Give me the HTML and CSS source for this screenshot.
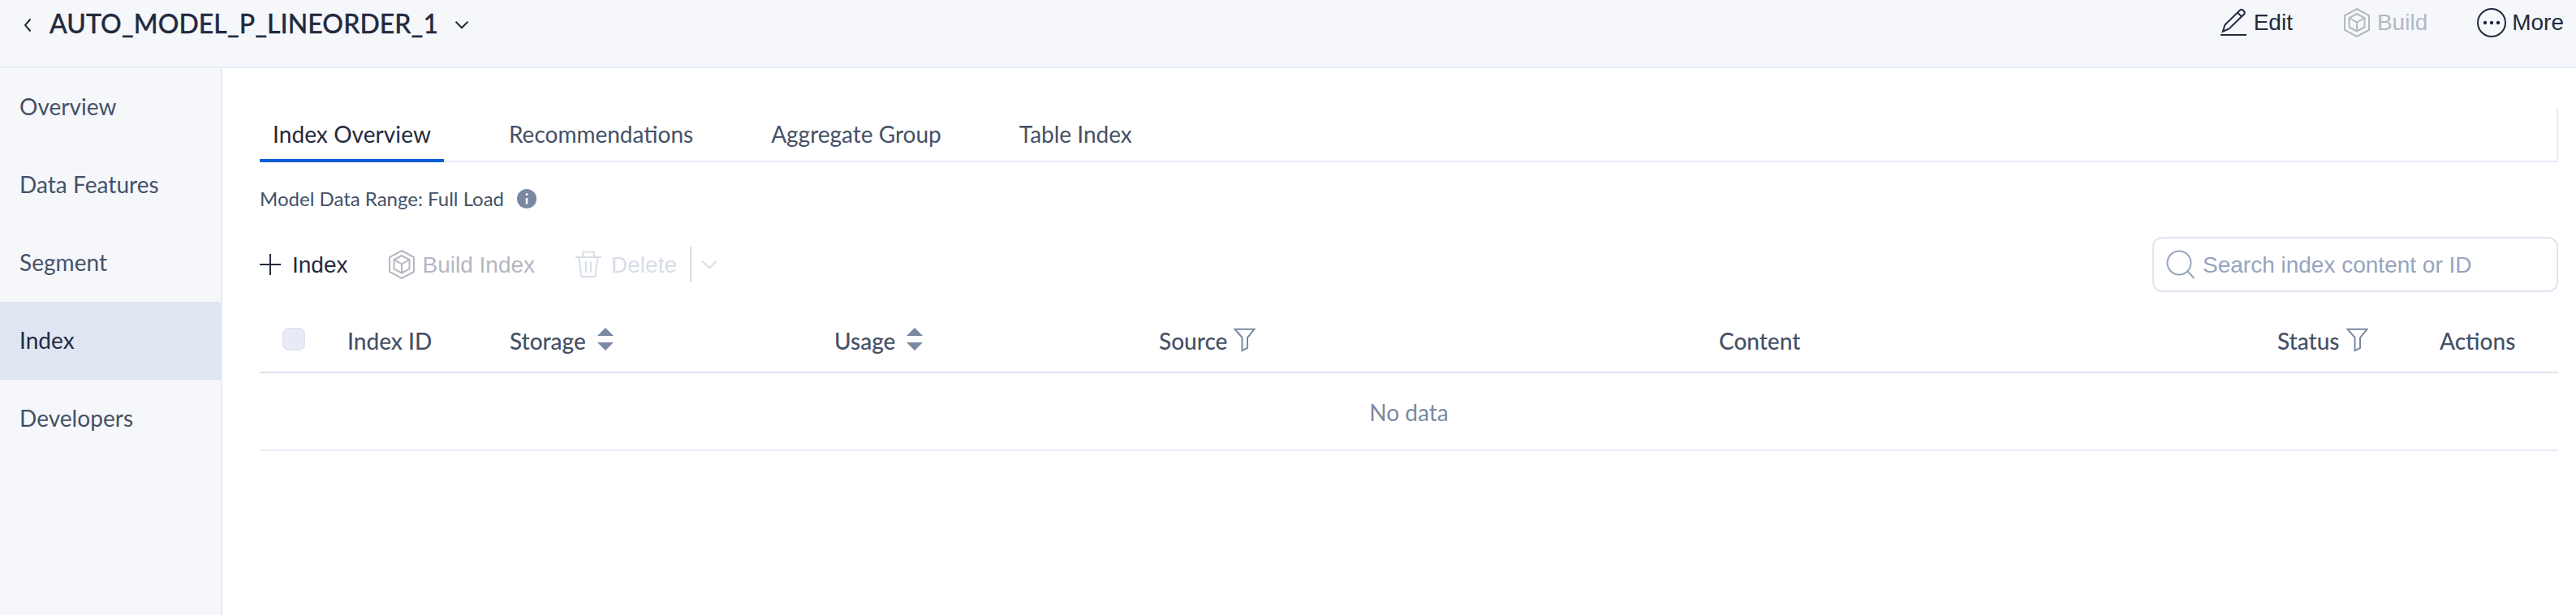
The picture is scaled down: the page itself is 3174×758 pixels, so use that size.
FILE: index.html
```html
<!DOCTYPE html>
<html lang="en">
<head>
<meta charset="utf-8">
<title>AUTO_MODEL_P_LINEORDER_1</title>
<link rel="stylesheet" href="styles.css">
</head>
<body>
<header class="topbar">
  <div class="model">
    <svg class="back" width="12" height="18" viewBox="0 0 12 18"><path d="M9.5 1.5 3 9l6.500 7.500"/></svg>
    <h1 class="title">AUTO_MODEL_P_LINEORDER_1</h1>
    <svg class="caret" width="18" height="12" viewBox="0 0 18 12"><path d="M1.500 1.800 9 9.300l7.500-7.500"/></svg>
  </div>
  <nav class="actions">
    <a class="act act-edit"><svg width="32" height="36" viewBox="0 0 32 36"><path d="M2.800 29 5.500 20.500 24 2.500q1.800-1.500 3.500 0l1.500 1.500q1.500 1.500 0 3.500L10.500 25.500zM21 5.500l5 5M0 33h32"/></svg>Edit</a>
    <a class="act act-build off"><svg width="32" height="36" viewBox="0 0 32 36"><path d="M16 1 31 9v18l-15 8-15-8V9zM16 7 25.500 12v11.500L16 28.500l-9.500-5V12zM6.500 12 16 17.500l9.500-5.500M16 17.500v11"/></svg>Build</a>
    <a class="act act-more"><svg width="36" height="38" viewBox="0 0 36 38"><circle cx="18" cy="19" r="17"/><g class="dots"><circle cx="10" cy="19" r="2.200"/><circle cx="18" cy="19" r="2.200"/><circle cx="26" cy="19" r="2.200"/></g></svg>More</a>
  </nav>
</header>
<div class="body">
  <aside class="side">
    <a class="side-item">Overview</a>
    <a class="side-item">Data Features</a>
    <a class="side-item">Segment</a>
    <a class="side-item current">Index</a>
    <a class="side-item">Developers</a>
  </aside>
  <main class="main">
    <div class="tabs">
      <a class="tab selected">Index Overview</a>
      <a class="tab">Recommendations</a>
      <a class="tab">Aggregate Group</a>
      <a class="tab">Table Index</a>
    </div>
    <div class="range">Model Data Range: Full Load
      <svg class="info" width="24" height="24" viewBox="0 0 24 24"><circle cx="12" cy="12" r="12"/><path d="M12 11v7.500"/><circle class="dot" cx="12" cy="6.500" r="1.500"/></svg>
    </div>
    <div class="toolbar">
      <button class="btn btn-add"><svg width="26" height="28" viewBox="0 0 26 28"><path d="M0 14h26M13 1v26"/></svg><span>Index</span></button>
      <button class="btn btn-build off"><svg width="32" height="36" viewBox="0 0 32 36"><path d="M16 1 31 9v18l-15 8-15-8V9zM16 7 25.500 12v11.500L16 28.500l-9.500-5V12zM6.500 12 16 17.500l9.500-5.500M16 17.500v11"/></svg><span>Build Index</span></button>
      <button class="btn btn-del"><svg width="32" height="34" viewBox="0 0 32 34"><path d="M0 8h32M9 8V3q0-1.500 1.500-1.500h11q1.500 0 1.500 1.500v5M4.500 8l2.500 22.500q.2 1.500 1.500 1.500h14.500q1.300 0 1.500-1.500L27.500 8M13 13v14M19 13v14"/></svg><span>Delete</span></button>
      <button class="btn btn-drop"><svg width="20" height="12" viewBox="0 0 20 12"><path d="M1 1.500l9 9 9-9"/></svg></button>
      <label class="search"><svg width="36" height="36" viewBox="0 0 36 36"><circle cx="16" cy="16" r="14.500"/><path d="m26.500 26.500 8 8.500"/></svg><input type="text" placeholder="Search index content or ID"></label>
    </div>
    <div class="table">
      <div class="row head">
        <div class="cell check"><span class="box"></span></div>
        <div class="cell">Index ID</div>
        <div class="cell">Storage<span class="sort"></span></div>
        <div class="cell">Usage<span class="sort"></span></div>
        <div class="cell">Source<svg class="filter" width="27" height="30" viewBox="0 0 27 30"><path d="M1.500 1.800h24L17 12v12.800l-6.500 3.400V12z"/></svg></div>
        <div class="cell">Content</div>
        <div class="cell">Status<svg class="filter" width="27" height="30" viewBox="0 0 27 30"><path d="M1.500 1.800h24L17 12v12.800l-6.500 3.400V12z"/></svg></div>
        <div class="cell">Actions</div>
      </div>
      <div class="empty">No data</div>
    </div>
  </main>
</div>
</body>
</html>
```
FILE: styles.css
```css
* { box-sizing: border-box; }
body {
  margin: 0;
  height: 758px;
  display: flex;
  flex-direction: column;
  overflow: hidden;
  background: #fff;
  color: #455166;
  font: 28px/36px Lato, sans-serif;
}
svg {
  display: block;
  flex: none;
  fill: none;
  stroke: currentColor;
  stroke-width: 2;
}
.topbar {
  flex: none;
  height: 84px;
  display: flex;
  justify-content: space-between;
  align-items: flex-start;
  background: #f5f7fb;
  border-bottom: 2px solid #e6ebf7;
  color: #232a3e;
}
.model { display: flex; align-items: center; padding-left: 28px; height: 62px; }
.title { margin: 0 20px 0 21px; font-size: 32px; line-height: 40px; font-weight: 500; letter-spacing: .08px; padding-bottom: 5px; -webkit-text-stroke: .3px; }
.actions { display: flex; height: 56px; align-items: center; padding-right: 15px; }
.act, .btn { display: flex; align-items: center; font-family: "Liberation Sans", Arial, sans-serif; }
.act { gap: 9px; }
.act-more { gap: 7px; }
.act-build { margin: 0 61px 0 63px; }
.off { color: #b5b7c1; }
.dots { fill: currentColor; stroke: none; }

.body { flex: 1; display: flex; min-height: 0; }
.side {
  flex: none;
  width: 274px;
  background: #f5f7fb;
  border-right: 2px solid #e6ebf7;
}
.side-item { display: block; height: 96px; padding: 0 24px; line-height: 94px; letter-spacing: .05px; }
.current { background: #dfe5f1; color: #232a3e; }

.main { flex: 1; padding: 48px 22px 0 46px; }
.tabs {
  height: 68px;
  display: flex;
  gap: 64px;
  border: 2px solid #e6ebf7;
  border-width: 0 2px 2px 0;
}
.tab { height: 68px; padding: 0 16px; line-height: 66px; }
.selected { color: #232a3e; border-bottom: 4px solid #0a5ed7; letter-spacing: .08px; }
.range {
  display: flex;
  align-items: center;
  gap: 16px;
  margin-top: 29px;
  height: 32px;
  font-size: 24px;
  line-height: 32px;
}
.info { fill: #7a88a1; stroke: none; }
.info path { stroke: #fff; stroke-width: 2.500; }
.info .dot { fill: #fff; }

.toolbar { display: flex; align-items: center; height: 68px; margin-top: 31px; }
.btn { border: 0; padding: 0; background: none; font-size: 28px; line-height: 36px; color: #232a3e; height: 44px; }
.btn span { padding-top: 2px; }
.btn-add { gap: 14px; }
.btn-build { margin-left: 50px; gap: 10px; }
.btn-del { margin-left: 50px; gap: 12px; padding-right: 16px; }
.btn.off { color: #b5b7c1; }
.btn-del, .btn-drop { color: #d8dde7; }
.btn-drop { border-left: 2px solid #d8dde7; padding-left: 12px; }
.search {
  display: flex;
  align-items: center;
  gap: 9px;
  width: 500px;
  height: 68px;
  margin-left: auto;
  padding: 0 15px;
  border: 2px solid #dfe5f1;
  border-radius: 12px;
  color: #96a5bd;
}
.search input {
  flex: 1;
  min-width: 0;
  border: 0;
  padding: 2px 0 0;
  background: none;
  font: 28px "Liberation Sans", Arial, sans-serif;
}
.search input::placeholder { color: #96a5bd; }

.table { margin-top: 20px; }
.row {
  display: grid;
  grid-template-columns: 88px 200px 400px 400px 690px 688px 200px 166px;
  height: 80px;
  border-bottom: 2px solid #dfe5f1;
}
.head { font-weight: 500; }
.cell { display: flex; align-items: center; padding: 1px 0 0 20px; }
.check { padding: 0 0 2px 28px; }
.box { width: 28px; height: 28px; background: #e6ebf7; border: 2px solid #dfe5f1; border-radius: 8px; }
.sort { width: 20px; height: 28px; margin: 0 0 3px 14px; display: grid; align-content: space-between; }
.sort::before, .sort::after { content: ""; border: 10px solid transparent; border-top-width: 0; border-bottom-color: #7a88a1; }
.sort::after { border-top: 10px solid #7a88a1; border-bottom-width: 0; }
.filter { margin: 0 0 1px 8px; color: #7a88a1; }
.empty { height: 96px; border-bottom: 2px solid #e6ebf7; text-align: center; line-height: 96px; color: #7a88a1; }
```
